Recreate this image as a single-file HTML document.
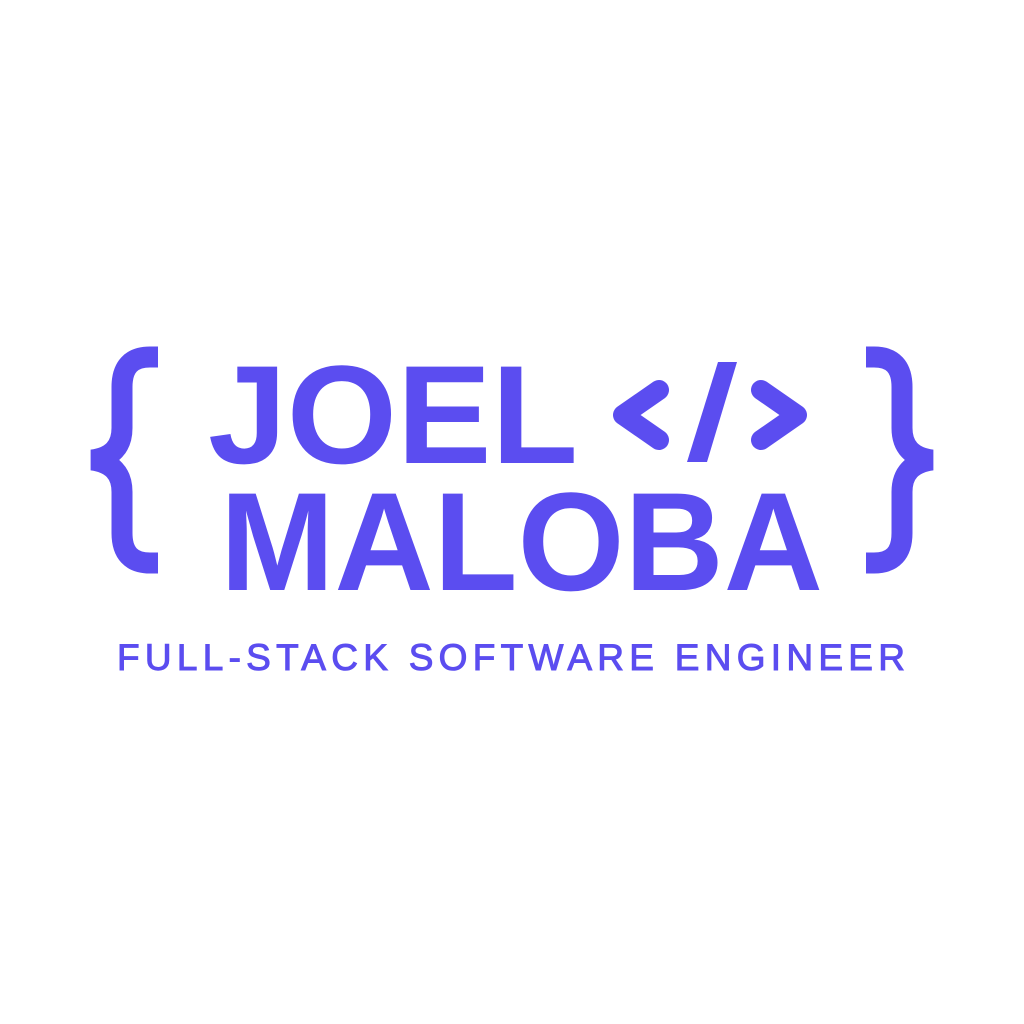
<!DOCTYPE html>
<html><head><style>
html,body{margin:0;padding:0;background:#fff;width:1024px;height:1024px;overflow:hidden}
</style></head><body>
<svg width="1024" height="1024" viewBox="0 0 1024 1024" xmlns="http://www.w3.org/2000/svg">
<g fill="none" stroke="#5B4DF0" stroke-width="21">
<path d="M158,357 H150 Q122,357 122,387 V428 Q122,456 92,460 Q122,464 122,492 V533 Q122,563 150,563 H158"/>
<path transform="translate(1024,0) scale(-1,1)" d="M158,357 H150 Q122,357 122,387 V428 Q122,456 92,460 Q122,464 122,492 V533 Q122,563 150,563 H158"/>
<g stroke-linecap="round" stroke-linejoin="round" stroke-width="20">
<path d="M659,390 L623,415 L659,440"/>
<path d="M761,390 L797,415 L761,440"/>
</g>
</g>
<polygon points="718,362 737,362 707,462 687,462" fill="#5B4DF0"/>
<g fill="#5B4DF0" font-family="Liberation Sans, sans-serif" font-weight="bold">
<text x="208" y="463" font-size="140" textLength="370" lengthAdjust="spacingAndGlyphs">JOEL</text>
<text x="220" y="590" font-size="140" textLength="603" lengthAdjust="spacingAndGlyphs">MALOBA</text>
<text x="117" y="670" font-size="37" font-weight="normal" stroke="#5B4DF0" stroke-width="1" textLength="788" lengthAdjust="spacing">FULL-STACK SOFTWARE ENGINEER</text>
</g>
</svg>
</body></html>
